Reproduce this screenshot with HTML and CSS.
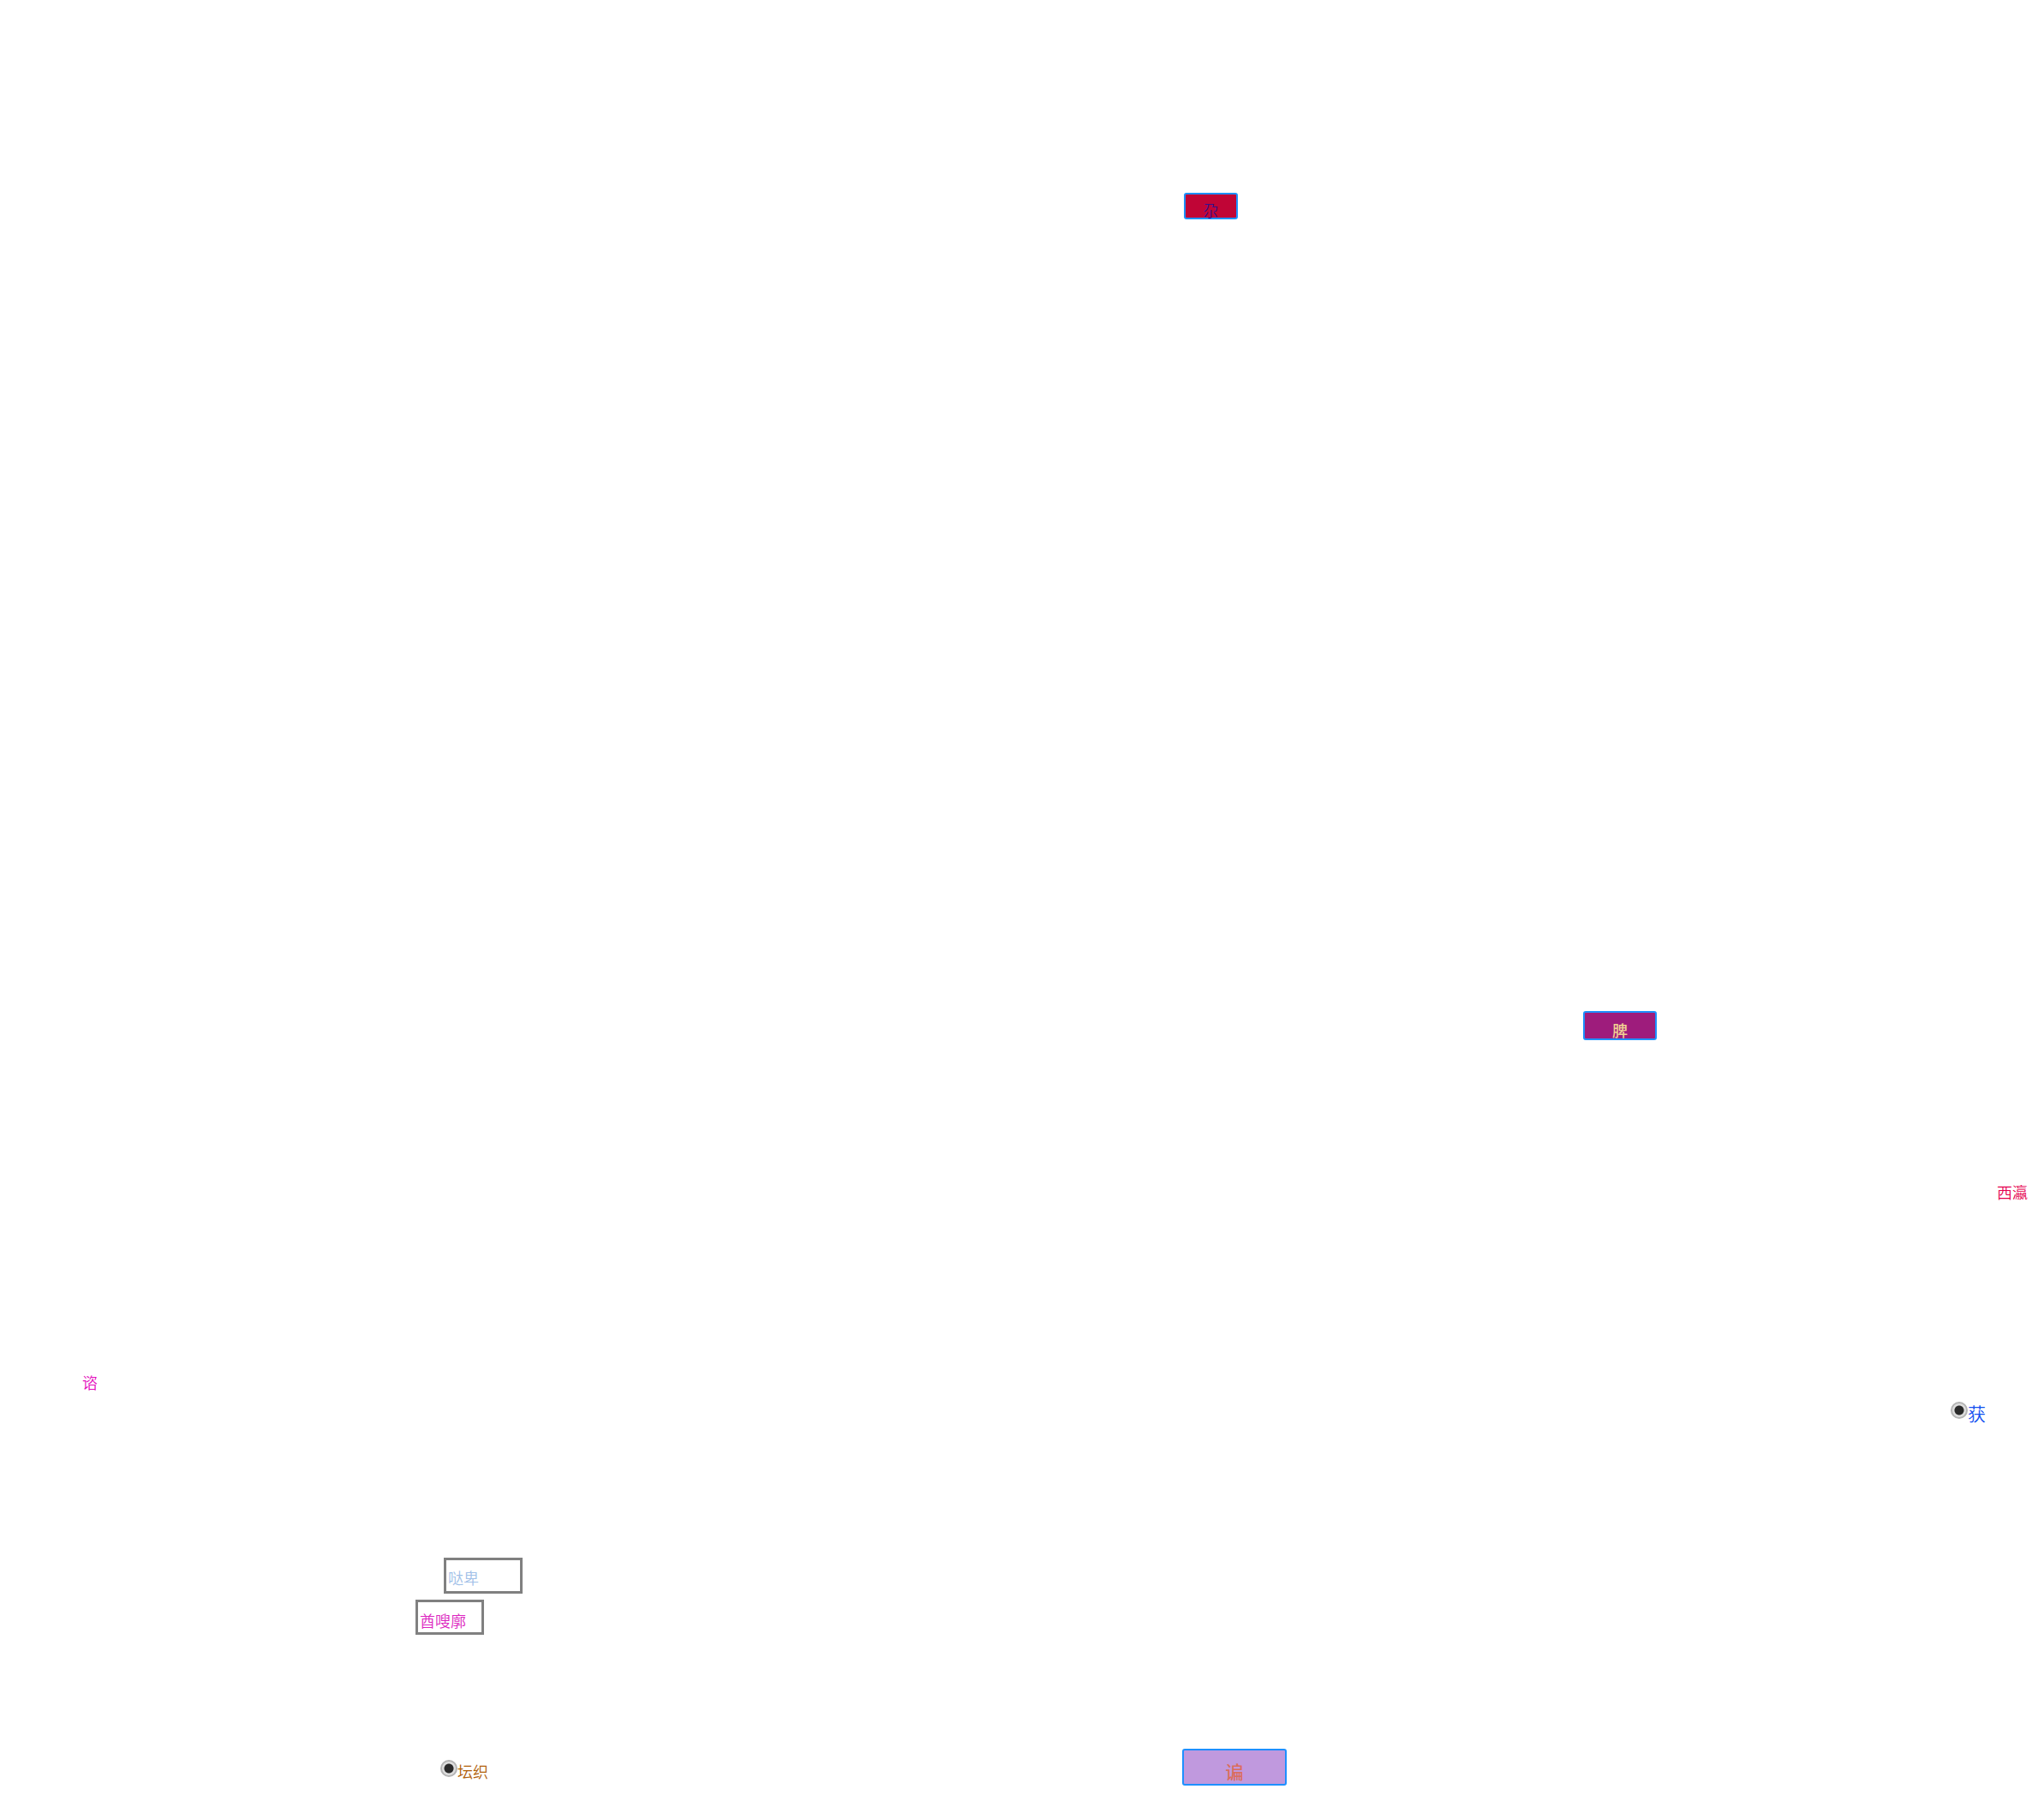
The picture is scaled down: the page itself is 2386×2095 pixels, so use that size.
FILE: index.html
```
<!DOCTYPE html>
<html lang="zh-CN">
<head>
<meta charset="utf-8">
<title>表单</title>
<link rel="stylesheet" href="styles.css">
</head>
<body>
<form class="board">
  <button type="button" class="btn btn-red">尕</button>
  <button type="button" class="btn btn-purple">脾</button>
  <span class="label label-red">西瀛</span>
  <span class="label label-pink">谘</span>
  <label class="choice choice-blue"><input type="radio" name="first" class="radio" checked>获</label>
  <input type="text" class="field field-blue" value="哒卑" aria-label="哒卑">
  <input type="text" class="field field-pink" value="酋嗖廓" aria-label="酋嗖廓">
  <label class="choice choice-brown"><input type="radio" name="second" class="radio" checked>坛织</label>
  <button type="button" class="btn btn-lilac">谝</button>
</form>
</body>
</html>
```
FILE: styles.css
```
* {
  box-sizing: border-box;
}

body {
  margin: 0;
  background: #ffffff;
  font-family: "Noto Sans CJK SC", sans-serif;
  font-size: 18px;
  font-weight: 350;
  line-height: 18px;
}

/* Column and row tracks share the window in proportion. */
.board {
  display: grid;
  min-height: 100vh;
  grid-template-columns:
    minmax(0, 96fr) [pink] minmax(0, 389fr) [field-b] minmax(0, 29fr)
    [brown] minmax(0, 4fr) [field-a] minmax(0, 862fr) [lilac] minmax(0, 2fr)
    [red] minmax(0, 466fr) [purple] minmax(0, 429fr) [blue] minmax(0, 54fr)
    [west] minmax(0, 55fr) [end];
  grid-template-rows:
    minmax(0, 225fr) [red] minmax(0, 955fr) [purple] minmax(0, 202fr)
    [west] minmax(0, 222fr) [pink] minmax(0, 32fr) [blue] minmax(0, 182fr)
    [field-a] minmax(0, 49fr) [field-b] minmax(0, 174fr) [lilac] minmax(0, 13fr)
    [brown] minmax(0, 41fr) [end];
  justify-items: start;
  align-items: start;
}

.btn {
  padding: 0;
  border: 2px solid #1e90ff;
  border-radius: 3px;
  font: inherit;
}

.btn-red {
  grid-area: red / red / end / end;
  width: 63px;
  height: 31px;
  padding-top: 9px;
  background: #c00536;
  color: #34108c;
}

.btn-purple {
  grid-area: purple / purple / end / end;
  width: 86px;
  height: 34px;
  padding-top: 9px;
  background: #9e1c7c;
  color: #f0cf92;
  font-weight: 500;
}

.btn-lilac {
  grid-area: lilac / lilac / end / end;
  width: 122px;
  height: 43px;
  padding-top: 8px;
  background: #c099de;
  color: #db6d5c;
  font-size: 21px;
  font-weight: 500;
}

.label-red {
  grid-area: west / west / end / end;
  color: #e5004e;
}

.label-pink {
  grid-area: pink / pink / end / end;
  color: #e40cbc;
}

.choice {
  display: flex;
  align-items: flex-start;
  padding-top: 4px;
  white-space: nowrap;
}

.choice-blue {
  grid-area: blue / blue / end / end;
  color: #1450f0;
  font-size: 21px;
}

.choice-brown {
  grid-area: brown / brown / end / end;
  color: #b0600a;
}

.radio {
  appearance: none;
  flex: none;
  width: 20px;
  height: 20px;
  margin: -4px 0 0;
  border: 2px solid #b4b4b4;
  border-radius: 50%;
  background: radial-gradient(circle, #2a2a2a 5px, #dedede 6px);
}

.field {
  padding: 6px 2px 0;
  border: 3px solid #808080;
  background: #ffffff;
  font: inherit;
}

.field-blue {
  grid-area: field-a / field-a / end / end;
  width: 92px;
  height: 42px;
  padding-top: 4px;
  color: #a0c0e8;
}

.field-pink {
  grid-area: field-b / field-b / end / end;
  width: 80px;
  height: 41px;
  color: #dc25c0;
}
```
